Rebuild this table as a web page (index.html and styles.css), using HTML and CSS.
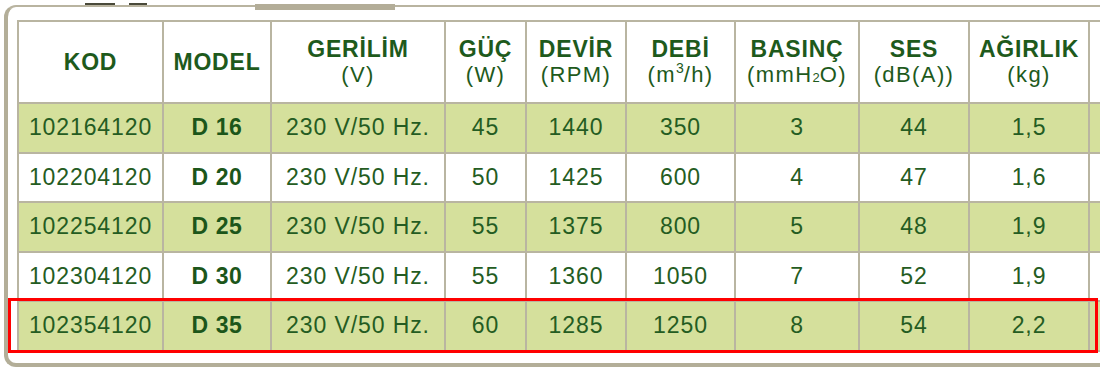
FILE: index.html
```html
<!DOCTYPE html>
<html lang="tr">
<head>
<meta charset="utf-8">
<title>D Serisi Teknik Özellikler</title>
<link rel="stylesheet" href="styles.css">
</head>
<body>
<div class="heading"><span class="heading-mark"></span><span class="heading-mark short"></span></div>
<div class="frame">
  <div class="tab-marker"></div>
  <table class="specs">
    <colgroup>
      <col class="c-kod"><col class="c-model"><col class="c-ger"><col class="c-guc"><col class="c-dev">
      <col class="c-debi"><col class="c-bas"><col class="c-ses"><col class="c-agr"><col class="c-extra">
    </colgroup>
    <thead>
      <tr>
        <th><b>KOD</b></th>
        <th><b>MODEL</b></th>
        <th><b>GERİLİM</b><br>(V)</th>
        <th><b>GÜÇ</b><br>(W)</th>
        <th><b>DEVİR</b><br>(RPM)</th>
        <th><b>DEBİ</b><br>(m<sup>3</sup>/h)</th>
        <th><b>BASINÇ</b><br>(mmH<sub>2</sub>O)</th>
        <th><b>SES</b><br>(dB(A))</th>
        <th><b>AĞIRLIK</b><br>(kg)</th>
        <th></th>
      </tr>
    </thead>
    <tbody>
      <tr class="alt"><td>102164120</td><td class="model">D 16</td><td>230 V/50 Hz.</td><td>45</td><td>1440</td><td>350</td><td>3</td><td>44</td><td>1,5</td><td></td></tr>
      <tr><td>102204120</td><td class="model">D 20</td><td>230 V/50 Hz.</td><td>50</td><td>1425</td><td>600</td><td>4</td><td>47</td><td>1,6</td><td></td></tr>
      <tr class="alt"><td>102254120</td><td class="model">D 25</td><td>230 V/50 Hz.</td><td>55</td><td>1375</td><td>800</td><td>5</td><td>48</td><td>1,9</td><td></td></tr>
      <tr><td>102304120</td><td class="model">D 30</td><td>230 V/50 Hz.</td><td>55</td><td>1360</td><td>1050</td><td>7</td><td>52</td><td>1,9</td><td></td></tr>
      <tr class="alt"><td>102354120</td><td class="model">D 35</td><td>230 V/50 Hz.</td><td>60</td><td>1285</td><td>1250</td><td>8</td><td>54</td><td>2,2</td><td></td></tr>
    </tbody>
  </table>
  <div class="highlight"></div>
</div>
</body>
</html>
```

FILE: styles.css
```css
html, body {
  margin: 0;
  padding: 0;
  background: #ffffff;
}
body {
  width: 1100px;
  height: 369px;
  overflow: hidden;
  font-family: "Liberation Sans", Arial, sans-serif;
}
.heading {
  height: 5px;
  display: flex;
  align-items: flex-end;
  gap: 14px;
  padding-left: 85px;
}
.heading-mark {
  display: block;
  width: 30px;
  height: 2px;
  margin-bottom: 0;
  background: #4a4a3a;
}
.heading-mark.short {
  width: 18px;
}
.frame {
  position: relative;
  width: 1140px;
  margin-left: 4px;
  border-top: 2px solid #b9b4a0;
  border-left: 4px solid #b3ae98;
  border-bottom: 4px solid #b3ae98;
  border-radius: 12px 0 0 12px;
  padding: 13px 0 11px 9px;
}
.tab-marker {
  position: absolute;
  top: -3px;
  left: 247px;
  width: 140px;
  height: 6px;
  background: #b3ad98;
}
.specs {
  border-collapse: collapse;
  table-layout: fixed;
  width: 1151px;
  color: #205a1e;
}
.c-kod { width: 145px; }
.c-model { width: 108px; }
.c-ger { width: 174px; }
.c-guc { width: 81px; }
.c-dev { width: 100px; }
.c-debi { width: 109px; }
.c-bas { width: 124px; }
.c-ses { width: 110px; }
.c-agr { width: 120px; }
.c-extra { width: 80px; }
.specs th,
.specs td {
  border: 2px solid #b9b5a1;
  padding: 0;
  text-align: center;
  vertical-align: middle;
  white-space: nowrap;
  overflow: hidden;
}
.specs th {
  height: 80px;
  font-size: 22px;
  font-weight: normal;
  line-height: 25px;
  letter-spacing: 1.4px;
  color: #1e5a1c;
}
.specs th b {
  font-weight: bold;
  font-size: 23px;
  letter-spacing: 0.8px;
}
.specs th sup {
  font-size: 14px;
  line-height: 0;
  vertical-align: 9px;
  letter-spacing: 0;
}
.specs th sub {
  font-size: 13px;
  line-height: 0;
  vertical-align: 0;
  letter-spacing: 0;
}
.specs td {
  height: 47.5px;
  font-size: 23px;
  letter-spacing: 0.9px;
  color: #245c22;
}
.specs td.model {
  font-weight: bold;
  letter-spacing: 0.6px;
  color: #1c561a;
}
.specs tr.alt td {
  background: #d5e09c;
}
.highlight {
  position: absolute;
  left: 0;
  top: 291px;
  width: 1090px;
  height: 55px;
  box-sizing: border-box;
  border: 3px solid #ff0000;
  pointer-events: none;
}
```
